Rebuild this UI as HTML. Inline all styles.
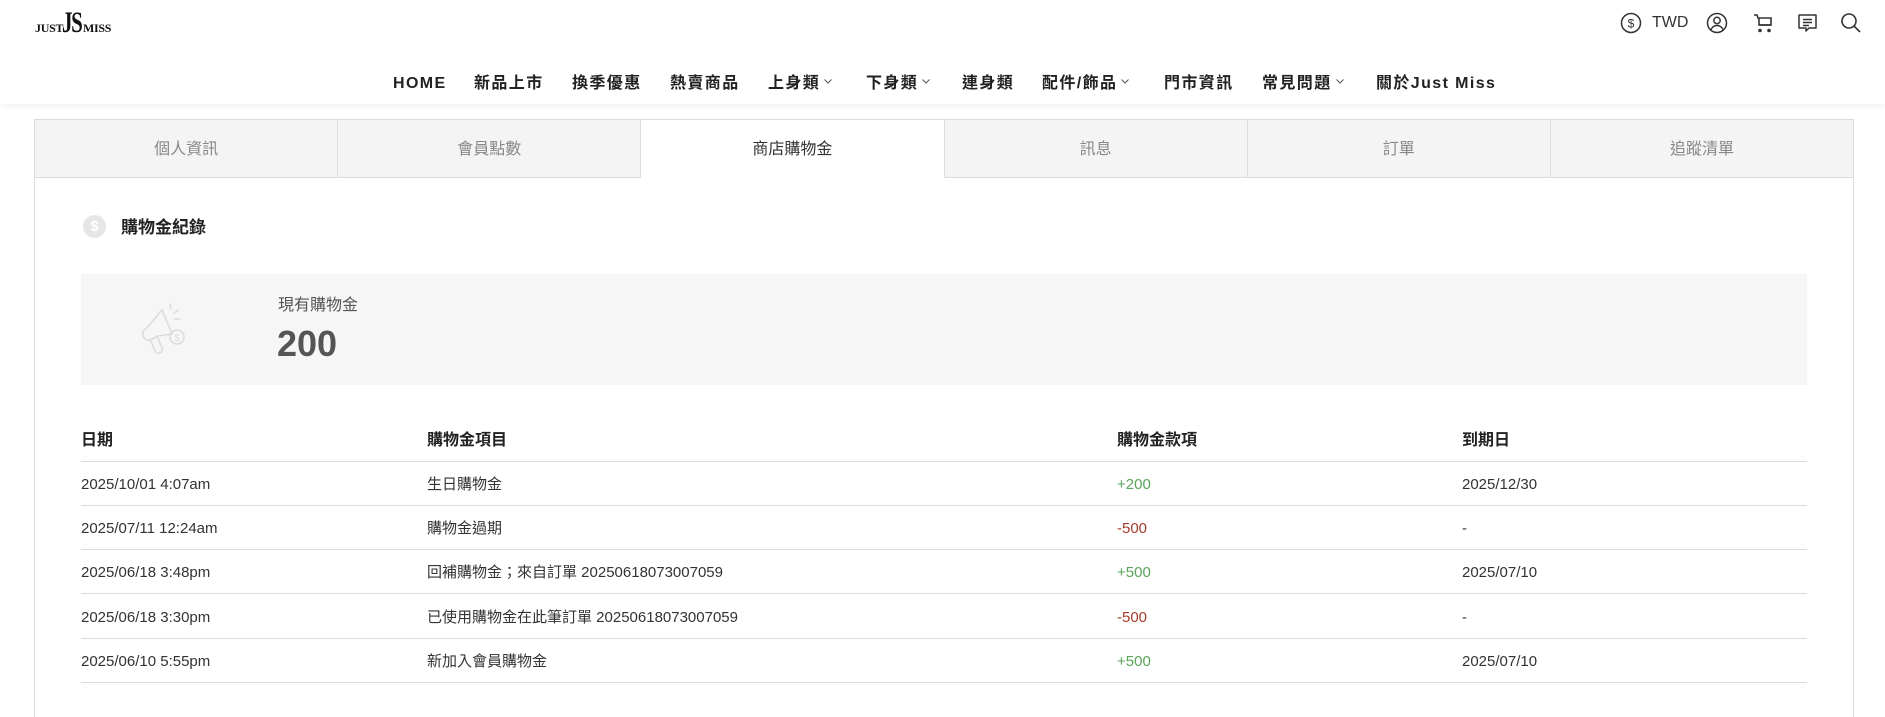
<!DOCTYPE html>
<html><head><meta charset="utf-8">
<style>
*{margin:0;padding:0;box-sizing:border-box}
body{width:1885px;height:704px;overflow:hidden;background:#fff;font-family:"Liberation Sans","Noto Sans CJK TC",sans-serif;color:#333;position:relative}
.abs{position:absolute}
.header{position:absolute;left:0;top:0;width:1885px;height:104px;background:#fff;box-shadow:0 2px 6px rgba(0,0,0,0.06)}
.nav{position:absolute;top:74px;font-size:16px;font-weight:bold;letter-spacing:1.4px;color:#222;font-family:"Liberation Sans","Noto Sans CJK TC",sans-serif;white-space:nowrap;line-height:20px}
.nav svg{margin-left:4px;vertical-align:middle;position:relative;top:-2px}
.tabs{position:absolute;left:34px;top:119px;width:1820px;height:59px;display:flex;border:1px solid #ddd;border-bottom:none}
.tab{flex:1;background:#f4f4f4;border-right:1px solid #ddd;border-bottom:1px solid #ddd;text-align:center;line-height:59px;font-size:16px;color:#888}
.tab:last-child{border-right:none}
.tab.act{background:#fff;border-bottom:none;color:#333}
.panel{position:absolute;left:34px;top:177px;width:1820px;height:540px;border-left:1px solid #ddd;border-right:1px solid #ddd}
.row{position:absolute;left:81px;width:1726px;height:44px;border-bottom:1px solid #dcdcdc;font-size:15px;color:#333}
.row span{position:absolute;top:1px;line-height:44px;white-space:nowrap}
.c1{left:0}.c2{left:346px}.c3{left:1036px}.c4{left:1381px}
.g{color:#5aa35a}.r{color:#a33a2a}
.hd span{font-weight:bold;font-size:16px;color:#222}
</style></head><body>
<div class="header">
  <div class="abs" style="left:35px;top:21px;font-family:'Liberation Serif',serif;font-weight:bold;font-size:12px;color:#111;letter-spacing:-0.3px">JUST</div>
  <div class="abs" style="left:62px;top:6px;font-family:'Liberation Serif',serif;font-weight:bold;font-size:30px;color:#111;transform:scaleX(0.7);transform-origin:left;letter-spacing:-2px">JS</div>
  <div class="abs" style="left:83px;top:21px;font-family:'Liberation Serif',serif;font-weight:bold;font-size:12px;color:#111;letter-spacing:-0.3px">MISS</div>

  <svg class="abs" style="left:1620px;top:12px" width="22" height="22" viewBox="0 0 22 22"><circle cx="11" cy="11" r="9.5" fill="none" stroke="#333" stroke-width="1.5"/><text x="11" y="15.5" font-size="12" text-anchor="middle" font-family="Liberation Sans" fill="#333">$</text></svg>
  <div class="abs" style="left:1652px;top:14px;font-size:16px;color:#333">TWD</div>
  <svg class="abs" style="left:1706px;top:12px" width="22" height="22" viewBox="0 0 22 22" fill="none" stroke="#333" stroke-width="1.5"><circle cx="11" cy="11" r="9.5"/><circle cx="11" cy="8.5" r="3.2"/><path d="M5 17.5c1.5-3 3.5-4 6-4s4.5 1 6 4"/></svg>
  <svg class="abs" style="left:1752px;top:12px" width="22" height="22" viewBox="0 0 22 22" fill="none" stroke="#333" stroke-width="1.6"><path d="M2 3h3l1 3h13v7H7V6"/><path d="M7 13h12"/><circle cx="8" cy="18.5" r="1" fill="#333"/><circle cx="17" cy="18.5" r="1" fill="#333"/></svg>
  <svg class="abs" style="left:1796px;top:12px" width="23" height="23" viewBox="0 0 23 23" fill="none" stroke="#333" stroke-width="1.5"><path d="M3 3h17v13h-7l-3 3v-3H3z" stroke-linejoin="round"/><path d="M7 7.5h9M7 10.5h9M7 13.5h6"/></svg>
  <svg class="abs" style="left:1840px;top:12px" width="22" height="22" viewBox="0 0 22 22" fill="none" stroke="#333" stroke-width="1.6"><circle cx="9" cy="9" r="7"/><path d="M14 14l6 6"/></svg>

  <div class="nav" style="left:393px">HOME</div>
  <div class="nav" style="left:474px">新品上市</div>
  <div class="nav" style="left:572px">換季優惠</div>
  <div class="nav" style="left:670px">熱賣商品</div>
  <div class="nav" style="left:768px">上身類<svg width="8" height="5" viewBox="0 0 8 5"><path d="M0.5 0.5L4 4L7.5 0.5" fill="none" stroke="#555" stroke-width="1"/></svg></div>
  <div class="nav" style="left:866px">下身類<svg width="8" height="5" viewBox="0 0 8 5"><path d="M0.5 0.5L4 4L7.5 0.5" fill="none" stroke="#555" stroke-width="1"/></svg></div>
  <div class="nav" style="left:962px">連身類</div>
  <div class="nav" style="left:1042px">配件/飾品<svg width="8" height="5" viewBox="0 0 8 5"><path d="M0.5 0.5L4 4L7.5 0.5" fill="none" stroke="#555" stroke-width="1"/></svg></div>
  <div class="nav" style="left:1164px">門市資訊</div>
  <div class="nav" style="left:1262px">常見問題<svg width="8" height="5" viewBox="0 0 8 5"><path d="M0.5 0.5L4 4L7.5 0.5" fill="none" stroke="#555" stroke-width="1"/></svg></div>
  <div class="nav" style="left:1376px">關於Just Miss</div>
</div>

<div class="tabs">
  <div class="tab">個人資訊</div><div class="tab">會員點數</div><div class="tab act">商店購物金</div><div class="tab">訊息</div><div class="tab">訂單</div><div class="tab">追蹤清單</div>
</div>
<div class="panel"></div>

<div class="abs" style="left:83px;top:215px;width:23px;height:23px;border-radius:50%;background:#e6e6e6;color:#fff;font-size:15px;font-weight:bold;text-align:center;line-height:23px">$</div>
<div class="abs" style="left:121px;top:216px;font-size:17px;font-weight:bold;color:#222;line-height:23px">購物金紀錄</div>

<div class="abs" style="left:81px;top:274px;width:1726px;height:111px;background:#f6f6f6"></div>
<svg class="abs" style="left:136px;top:300px" width="60" height="56" viewBox="0 0 60 56" fill="none" stroke="#dcdcdc" stroke-width="1.6" stroke-linecap="round" stroke-linejoin="round"><path d="M26 10l10 24-14 2-8 4c-3 1-6-1-7-4s0-6 3-7z"/><path d="M14 39l5 12c1 2 3 3 5 2s3-3 2-5l-4-10"/><path d="M34 4l1 5M42 10l-4 3M44 19l-5 0"/><circle cx="41" cy="37" r="7"/><text x="41" y="41" font-size="9" text-anchor="middle" fill="#dcdcdc" stroke="none" font-family="Liberation Sans">$</text></svg>
<div class="abs" style="left:278px;top:295px;font-size:16px;color:#555;line-height:22px">現有購物金</div>
<div class="abs" style="left:277px;top:321px;font-size:36px;font-weight:bold;color:#555;line-height:46px">200</div>

<div class="row hd" style="top:418px"><span class="c1">日期</span><span class="c2">購物金項目</span><span class="c3">購物金款項</span><span class="c4">到期日</span></div>
<div class="row" style="top:462px"><span class="c1">2025/10/01 4:07am</span><span class="c2">生日購物金</span><span class="c3 g">+200</span><span class="c4">2025/12/30</span></div>
<div class="row" style="top:506px"><span class="c1">2025/07/11 12:24am</span><span class="c2">購物金過期</span><span class="c3 r">-500</span><span class="c4">-</span></div>
<div class="row" style="top:550px"><span class="c1">2025/06/18 3:48pm</span><span class="c2">回補購物金；來自訂單 20250618073007059</span><span class="c3 g">+500</span><span class="c4">2025/07/10</span></div>
<div class="row" style="top:595px"><span class="c1">2025/06/18 3:30pm</span><span class="c2">已使用購物金在此筆訂單 20250618073007059</span><span class="c3 r">-500</span><span class="c4">-</span></div>
<div class="row" style="top:639px"><span class="c1">2025/06/10 5:55pm</span><span class="c2">新加入會員購物金</span><span class="c3 g">+500</span><span class="c4">2025/07/10</span></div>
</body></html>
